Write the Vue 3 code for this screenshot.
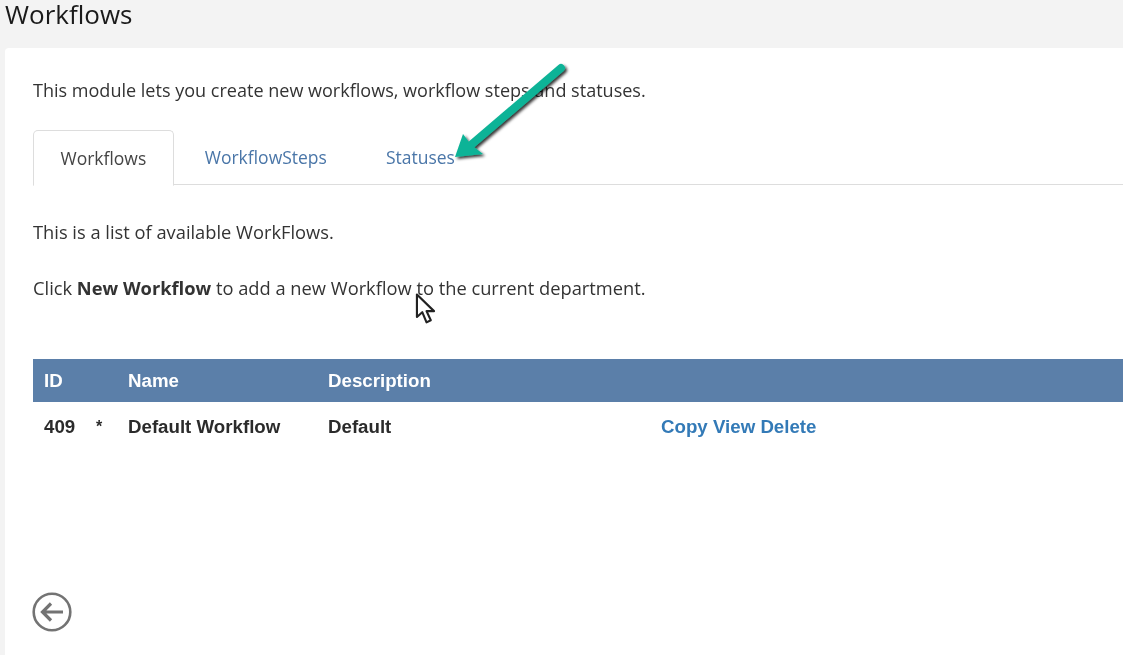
<script setup>
const tabs = [
  { label: 'Workflows', active: true },
  { label: 'WorkflowSteps', active: false },
  { label: 'Statuses', active: false },
]
</script>

<template>
  <div class="page">
    <h1 class="title">Workflows</h1>
    <main class="card">
      <p class="intro">This module lets you create new workflows, workflow steps and statuses.</p>
      <nav class="tabs">
        <a v-for="t in tabs" :key="t.label" class="tab" :class="{ active: t.active }">{{ t.label }}</a>
      </nav>
      <p class="list-note">This is a list of available WorkFlows.</p>
      <p class="click-note">Click <b>New Workflow</b> to add a new Workflow to the current department.</p>
      <table class="grid">
        <thead>
          <tr>
            <th class="c-id">ID</th>
            <th class="c-star"></th>
            <th class="c-name">Name</th>
            <th class="c-desc">Description</th>
            <th></th>
          </tr>
        </thead>
        <tbody>
          <tr>
            <td>409</td>
            <td class="star">*</td>
            <td>Default Workflow</td>
            <td>Default</td>
            <td class="actions"><a>Copy</a> <a>View</a> <a>Delete</a></td>
          </tr>
        </tbody>
      </table>
      <svg class="back" width="40" height="40" viewBox="0 0 40 40" fill="none" stroke="#737373">
        <circle cx="20" cy="20" r="18.3" stroke-width="2.6" />
        <path d="M31 20H11M19 11.500 10.500 20l8.500 8.500" stroke-width="3.2" />
      </svg>
    </main>

    <svg class="arrow" width="130" height="110" viewBox="0 0 130 110" fill="none">
      <defs>
        <filter id="sh" x="-20%" y="-20%" width="150%" height="150%">
          <feDropShadow dx="2" dy="2" stdDeviation="1.4" flood-color="#000" flood-opacity="0.8" />
        </filter>
      </defs>
      <g filter="url(#sh)">
        <path d="M109 9 20 85" stroke="#0fb397" stroke-width="8" stroke-linecap="round" />
        <path d="M3 98 11 75 17 83 22 88 31 95Z" fill="#0fb397" />
      </g>
    </svg>

    <svg class="cursor" width="22" height="32" viewBox="0 0 20 30">
      <path d="M1.500 1.500V22.500L6.500 18 10.500 27.500 14.500 25.500 10.500 17H17.500Z" fill="#fff" stroke="#222" stroke-width="2" stroke-linejoin="round" />
    </svg>
  </div>
</template>

<style>
html, body { margin: 0; background: #f3f3f3; }
</style>

<style scoped>
.page {
  position: relative;
  width: 1123px;
  height: 655px;
  overflow: hidden;
  background: #f3f3f3;
  font-family: "Open Sans", "Noto Sans", sans-serif;
  color: #333;
  filter: blur(0.3px);
}
.title {
  margin: 0;
  padding: 0 0 0 5px;
  height: 48px;
  box-sizing: border-box;
  font-size: 26px;
  line-height: 29px;
  font-weight: 400;
  color: #1a1a1a;
}
.card {
  margin-left: 5px;
  height: 607px;
  padding: 30px 0 0 28px;
  box-sizing: border-box;
  background: #fff;
  border-radius: 4px 0 0 0;
  position: relative;
}
.intro, .list-note, .click-note {
  margin: 0;
  line-height: 24px;
}
.intro { font-size: 18.05px; }
.list-note, .click-note { font-size: 18.3px; }
.tabs {
  display: flex;
  margin-top: 28px;
  height: 54px;
  border-bottom: 1px solid #ddd;
  font-size: 17.5px;
}
.tab {
  padding: 15px 29.500px 0;
  color: #4a76a8;
}
.tab:nth-child(2) { padding-left: 31px; }
.tab.active {
  padding: 15px 26.500px 0;
  color: #444;
  background: #fff;
  border: 1px solid #ddd;
  border-bottom: 1px solid #fff;
  border-radius: 5px 5px 0 0;
  height: 39px;
}
.list-note { margin-top: 35px; }
.click-note { margin-top: 32px; }
.click-note b { color: #333; }
.grid {
  margin-top: 59px;
  width: 1090px;
  border-collapse: collapse;
  table-layout: fixed;
  font-family: "Liberation Sans", Arial, sans-serif;
  font-size: 18.7px;
  font-weight: 700;
}
.grid th {
  height: 43px;
  padding: 0;
  text-align: left;
  color: #fff;
  background: #5b7fa9;
}
.grid td {
  height: 50px;
  padding: 0;
  color: #2b2b2b;
}
.grid th:first-child, .grid td:first-child { padding-left: 11px; }
.c-id { width: 52px; }
.c-star { width: 32px; }
.c-name { width: 200px; }
.c-desc { width: 333px; }
.grid td.actions { color: #337ab7; }
.grid td.star { font-size: 16px; }
.back {
  position: absolute;
  left: 27px;
  top: 544px;
}
.arrow {
  position: absolute;
  left: 452px;
  top: 59px;
}
.cursor {
  position: absolute;
  left: 415px;
  top: 293px;
}
</style>
